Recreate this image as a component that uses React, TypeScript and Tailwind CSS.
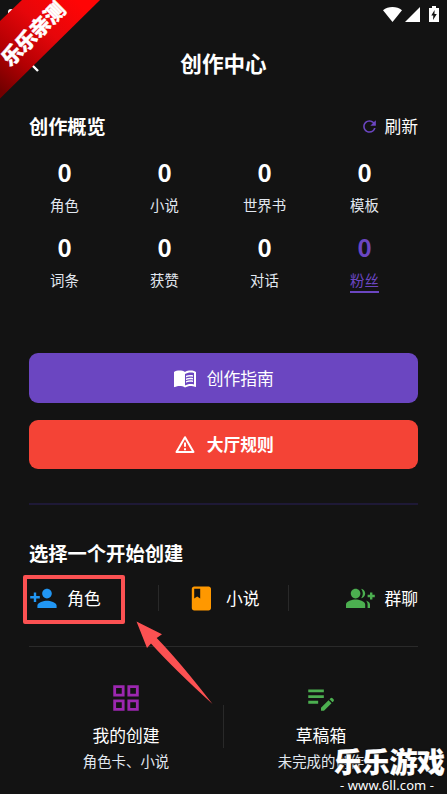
import { MdRefresh, MdMenuBook, MdPersonAdd, MdBook, MdGroupAdd, MdGridView, MdEditNote } from 'react-icons/md';

type Stat = { label: string; value: number; active?: boolean };

const stats: Stat[] = [
  { label: '角色', value: 0 },
  { label: '小说', value: 0 },
  { label: '世界书', value: 0 },
  { label: '模板', value: 0 },
  { label: '词条', value: 0 },
  { label: '获赞', value: 0 },
  { label: '对话', value: 0 },
  { label: '粉丝', value: 0, active: true },
];

function StatusBar() {
  return (
    <div className="flex h-[28px] items-end pl-2 pr-[8px] pb-[6px] text-white">
      <span className="h-[13px] w-1.5 rounded-full bg-white" />
      <svg className="ml-auto h-[15px] w-[19px]" viewBox="0 0 19 15" fill="currentColor">
        <path d="M9.5 15 0 3.2C2.6 1 6 0 9.5 0S16.4 1 19 3.2Z" />
      </svg>
      <svg className="ml-[3px] h-[15px] w-[15px]" viewBox="0 0 15 15" fill="currentColor">
        <path d="M0 15 15 0v15Z" />
      </svg>
      <svg className="ml-[9px] h-[16px] w-[10px]" viewBox="0 0 10 16">
        <path d="M3 0h4v2h3v14H0V2h3Z" fill="#fff" />
        <path d="M5.6 4 2.3 9.6h2L4 14l3.8-6H5.5Z" fill="#131313" />
      </svg>
    </div>
  );
}

function StatCell({ label, value, active }: Stat) {
  return (
    <div className={`flex h-[74.5px] flex-col items-center ${active ? 'text-[#6b46c1]' : 'text-white'}`}>
      <span className="h-[34px] text-[24px] leading-[30px] font-bold">{value}</span>
      <span
        className={`flex h-[27px] items-center border-b-2 pt-[2px] text-[14.4px] leading-[25px] ${
          active ? 'border-[#6b46c1]' : 'border-transparent text-[#e2e8f0]'
        }`}
      >
        {label}
      </span>
    </div>
  );
}

function Ribbon() {
  return (
    <div className="absolute top-0 left-0 h-[100px] w-[102px]">
      <svg className="h-[100px] w-[102px]" viewBox="0 0 102 100">
        <defs>
          <linearGradient id="ribbon" x1="0" y1="90" x2="75" y2="0" gradientUnits="userSpaceOnUse">
            <stop offset="0" stopColor="#720000" />
            <stop offset="0.3" stopColor="#b30003" />
            <stop offset="0.65" stopColor="#e6060a" />
            <stop offset="1" stopColor="#ff0505" />
          </linearGradient>
        </defs>
        <path d="M22 0H100L0 98.5V21Z" fill="url(#ribbon)" />
      </svg>
      <span className="absolute top-[20px] left-[-9.5px] w-[82px] -rotate-45 text-center text-[20.5px] leading-[26px] font-black tracking-[-0.6px] text-white [-webkit-text-stroke:0.4px_white]">
        乐乐亲测
      </span>
    </div>
  );
}

function Watermark() {
  return (
    <div className="absolute top-[745px] left-[334px] flex w-[113px] flex-col text-white">
      <span className="text-[28px] leading-[32px] font-black tracking-[-0.3px] whitespace-nowrap [-webkit-text-stroke:0.2px_white] [text-shadow:0_0_2px_#131313,1px_1px_1px_#131313]">
        乐乐游戏
      </span>
      <span className="pl-[6px] font-['Noto_Sans'] text-[13px] leading-[16px] tracking-[0.1px] whitespace-nowrap">- www.6ll.com -</span>
    </div>
  );
}

export default function App() {
  return (
    <div className="relative h-[794px] w-[447px] overflow-hidden bg-[#131313] font-['Noto_Sans_CJK_SC',sans-serif] text-white">
      <StatusBar />
      <header className="flex h-[70px] items-center px-[29px]">
        <svg className="mt-[2px] h-[22px] w-[13px]" viewBox="0 0 13 22" fill="none" stroke="currentColor" strokeWidth="2.4">
          <path d="m9 4-7 7 7 7" />
        </svg>
        <h1 className="flex-1 pr-[13px] text-center text-[21.6px] font-bold">创作中心</h1>
      </header>

      <main className="px-[29px]">
        <div className="flex h-[56px] items-center justify-between">
          <h2 className="text-[19.2px] font-bold">创作概览</h2>
          <button className="flex items-center gap-[5px] text-[16.8px]">
            <MdRefresh className="size-[19px] text-[#6b46c1]" />
            <span className="pt-[2px]">刷新</span>
          </button>
        </div>

        <section className="-mx-[14.5px] mt-[3px] grid h-[149px] grid-cols-[repeat(4,100px)]">
          {stats.map((s) => (
            <StatCell key={s.label} {...s} />
          ))}
        </section>

        <div className="mt-[47px] flex flex-col gap-[17px]">
          <button className="flex h-[50px] items-center justify-center gap-[9.6px] rounded-[9px] bg-[#6b46c1] text-[16.8px]">
            <MdMenuBook className="size-[24px]" />
            <span className="pt-[1px]">创作指南</span>
          </button>
          <button className="flex h-[49px] items-center justify-center gap-[9.6px] rounded-[9px] bg-[#f44336] text-[16.8px] font-bold">
            <svg className="mt-px size-[24px]" viewBox="0 0 24 24" fill="none" stroke="currentColor" strokeWidth="2" strokeLinejoin="round">
              <path d="M12 4.2 20.5 19h-17Z" />
              <path d="M12 9.5v4.2M12 15.2v2" />
            </svg>
            <span className="pt-[1px]">大厅规则</span>
          </button>
        </div>

        <div className="mt-[34px] h-[2px] bg-[#1e1936]" />

        <h2 className="mt-[34px] text-[19.3px] leading-[29px] font-bold">选择一个开始创建</h2>

        <section className="mt-[16px] grid h-[28px] grid-cols-[129px_131px_129px] items-center text-[16.8px]">
          <div className="flex items-center gap-[9.4px]">
            <MdPersonAdd className="size-[28.8px] text-[#2196f3]" />
            <span className="pt-[1px]">角色</span>
          </div>
          <div className="flex h-[26px] items-center justify-center gap-[9.8px] border-x border-[#292929]">
            <MdBook className="size-[28.8px] text-[#ff9800]" />
            <span className="pt-[1px]">小说</span>
          </div>
          <div className="flex items-center justify-end gap-[9.4px]">
            <MdGroupAdd className="size-[28.8px] text-[#4caf50]" />
            <span className="pt-[1px]">群聊</span>
          </div>
        </section>

        <div className="mt-[34px] h-px bg-[#2a2a2a]" />

        <section className="mt-[34px] grid grid-cols-[194px_1px_194px] items-start">
          <div className="flex flex-col items-center">
            <MdGridView className="size-[34px] text-[#9c27b0]" />
            <span className="mt-[7px] text-[16.8px] leading-[26px]">我的创建</span>
            <span className="text-[14.4px] leading-[26px] text-[#e2e8f0]">角色卡、小说</span>
          </div>
          <div className="mt-[24px] h-[43px] bg-[#292929]" />
          <div className="flex flex-col items-center">
            <MdEditNote className="size-[34px] text-[#4caf50]" />
            <span className="mt-[7px] text-[16.8px] leading-[26px]">草稿箱</span>
            <span className="text-[14.4px] leading-[26px] text-[#e2e8f0]">未完成的创作</span>
          </div>
        </section>
      </main>

      <Ribbon />
      <div className="absolute top-[575px] left-[23px] h-[49px] w-[102px] rounded-[2px] border-4 border-[#fc5152]" />
      <svg className="absolute top-[620px] left-[135px] h-[87px] w-[80px]" viewBox="135 620 80 87">
        <path d="M136.5 621.5 162 634.3 156.7 638 Q180 662 212.5 704 Q174 669 151 643.5 L147 648Z" fill="#fc5152" />
      </svg>
      <Watermark />
    </div>
  );
}
